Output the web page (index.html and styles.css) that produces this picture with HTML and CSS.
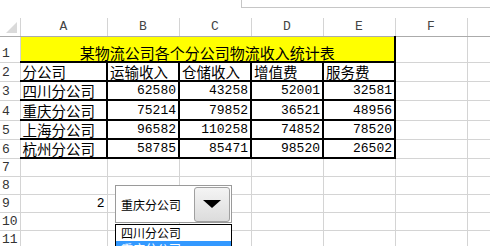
FILE: index.html
```html
<!DOCTYPE html>
<html lang="zh-CN">
<head>
    <meta charset="UTF-8">
    <meta name="viewport" content="width=device-width, initial-scale=1.0">
    <title>物流收入统计</title>
    <link rel="stylesheet" href="styles.css">
</head>
<body>
    <!-- bottom edge of the formula bar -->
    <div class="formula-bar"><div class="formula-box"></div></div>

    <div class="sheet">
        <table class="grid">
            <colgroup>
                <col class="col-head">
                <col class="col-a">
                <col class="col-n">
                <col class="col-n">
                <col class="col-n">
                <col class="col-n">
                <col class="col-n">
                <col class="col-last">
            </colgroup>
            <tr class="row-head">
                <th class="corner"><span class="tri"></span></th>
                <th>A</th><th>B</th><th>C</th><th>D</th><th>E</th><th>F</th><th></th>
            </tr>
            <tr class="row-title">
                <td class="rh">1</td>
                <td class="title zh" colspan="5">某物流公司各个分公司物流收入统计表</td>
                <td></td><td></td>
            </tr>
            <tr class="row-data">
                <td class="rh">2</td>
                <td class="b zh first">分公司</td>
                <td class="b zh">运输收入</td>
                <td class="b zh">仓储收入</td>
                <td class="b zh">增值费</td>
                <td class="b zh">服务费</td>
                <td></td><td></td>
            </tr>
            <tr class="row-data">
                <td class="rh">3</td>
                <td class="b zh first">四川分公司</td>
                <td class="b num">62580</td><td class="b num">43258</td><td class="b num">52001</td><td class="b num">32581</td>
                <td></td><td></td>
            </tr>
            <tr class="row-data tall">
                <td class="rh">4</td>
                <td class="b zh first">重庆分公司</td>
                <td class="b num">75214</td><td class="b num">79852</td><td class="b num">36521</td><td class="b num">48956</td>
                <td></td><td></td>
            </tr>
            <tr class="row-data">
                <td class="rh">5</td>
                <td class="b zh first">上海分公司</td>
                <td class="b num">96582</td><td class="b num">110258</td><td class="b num">74852</td><td class="b num">78520</td>
                <td></td><td></td>
            </tr>
            <tr class="row-data">
                <td class="rh">6</td>
                <td class="b zh first">杭州分公司</td>
                <td class="b num">58785</td><td class="b num">85471</td><td class="b num">98520</td><td class="b num">26502</td>
                <td></td><td></td>
            </tr>
            <tr class="row-plain">
                <td class="rh">7</td><td></td><td></td><td></td><td></td><td></td><td></td><td></td>
            </tr>
            <tr class="row-plain">
                <td class="rh">8</td><td></td><td></td><td></td><td></td><td></td><td></td><td></td>
            </tr>
            <tr class="row-plain">
                <td class="rh">9</td><td class="num">2</td><td></td><td></td><td></td><td></td><td></td><td></td>
            </tr>
            <tr class="row-plain">
                <td class="rh">10</td><td></td><td></td><td></td><td></td><td></td><td></td><td></td>
            </tr>
            <tr class="row-plain">
                <td class="rh">11</td><td></td><td></td><td></td><td></td><td></td><td></td><td></td>
            </tr>
        </table>

        <!-- form control: combo box linked to A9, opened -->
        <div class="combo">
            <div class="combo-field">
                <span class="combo-value">重庆分公司</span>
                <span class="combo-btn"><span class="arrow"></span></span>
            </div>
            <ul class="combo-list">
                <li>四川分公司</li>
                <li class="active">重庆分公司</li>
            </ul>
        </div>
    </div>
</body>
</html>
```

FILE: styles.css
```css
html, body {
    margin: 0;
    padding: 0;
}
body {
    width: 490px;
    height: 246px;
    overflow: hidden;
    background: #fff;
    font-family: "Liberation Mono", "Noto Sans CJK SC", monospace;
    font-size: 13px;
    color: #000;
}
.formula-bar {
    height: 18px;
}
.formula-box {
    margin-left: 241px;
    height: 7px;
    border-left: 1px solid #c6c6c6;
    border-bottom: 1px solid #c6c6c6;
}
.sheet {
    position: relative;
    height: 228px;
    overflow: hidden;
}
.grid {
    border-collapse: collapse;
    table-layout: fixed;
    width: 490px;
}
.col-head { width: 20px; }
.col-a { width: 87px; }
.col-n { width: 72px; }
.col-last { width: 23px; }

th, td {
    border: 1px solid #d4d4d4;
    padding: 0 2px;
    white-space: nowrap;
    overflow: hidden;
    vertical-align: bottom;
    line-height: 16px;
}
th {
    border-top: none;
    border-bottom: 1px solid #ababab;
    font-weight: normal;
    color: #444;
    text-align: center;
    vertical-align: middle;
}
.row-head { height: 18px; }
.row-title { height: 26px; }
.row-data { height: 19px; }
.row-data.tall { height: 20px; }
.row-plain { height: 18px; }

.corner {
    position: relative;
    border-left: none;
}
.tri {
    position: absolute;
    right: 3px;
    bottom: 3px;
    width: 0;
    height: 0;
    border-left: 11px solid transparent;
    border-bottom: 11px solid #dadada;
}
.rh {
    border-left: none;
    color: #333;
    padding: 0 0 0 2px;
    text-align: left;
}
.zh {
    font-family: "Noto Sans CJK SC", sans-serif;
    font-size: 14.5px;
    text-align: left;
}
.num {
    text-align: right;
}
.title {
    background: #ffff00;
    text-align: center;
    font-size: 15px;
    border-right: 2px solid #000;
    border-bottom: 2px solid #000;
}
.b {
    border: 2px solid #000;
}
.b.first {
    border-left: 1px solid #000;
}

/* dropdown form control */
.combo {
    position: absolute;
    left: 115px;
    top: 167px;
    width: 117px;
    font-family: "Noto Sans CJK SC", sans-serif;
    font-size: 12px;
}
.combo-field {
    display: flex;
    align-items: center;
    justify-content: space-between;
    height: 36px;
    border: 1px solid #9a9a9a;
    background: #fff;
    padding: 0 1px 0 5px;
}
.combo-btn {
    display: flex;
    align-items: center;
    justify-content: center;
    width: 34px;
    height: 33px;
    border: 1px solid #a0a0a0;
    border-radius: 3px;
    background: linear-gradient(#f4f4f4, #dcdcdc);
}
.arrow {
    width: 0;
    height: 0;
    border-left: 9px solid transparent;
    border-right: 9px solid transparent;
    border-top: 8px solid #000;
}
.combo-list {
    list-style: none;
    margin: 1px 0 0;
    padding: 0;
    border: 1px solid #000;
    background: #fff;
}
.combo-list li {
    height: 16px;
    line-height: 16px;
    padding-left: 5px;
}
.combo-list .active {
    background: #3399ff;
    color: #fff;
}
```
